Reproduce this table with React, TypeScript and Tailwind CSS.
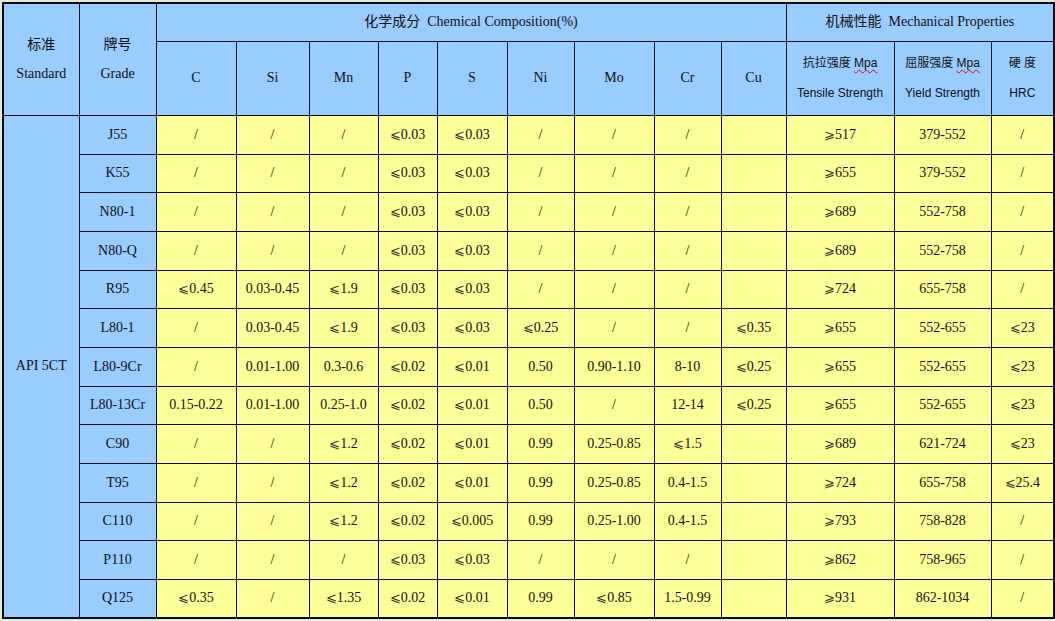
import React from "react";

const serif = "font-['Liberation_Serif','Noto_Sans_CJK_SC',serif]";
const sans = "font-['Liberation_Sans','Noto_Sans_CJK_SC',sans-serif]";

const colWidths = [76, 77, 80, 73, 69, 59, 70, 67, 80, 67, 65, 108, 97, 63];
const rowHeights = [39, 38, 39, 39, 38, 39, 39, 38, 39, 39, 38, 39, 39];

const elements = ["C", "Si", "Mn", "P", "S", "Ni", "Mo", "Cr", "Cu"];

const rows: string[][] = [
  ["J55", "/", "/", "/", "⩽0.03", "⩽0.03", "/", "/", "/", "", "⩾517", "379-552", "/"],
  ["K55", "/", "/", "/", "⩽0.03", "⩽0.03", "/", "/", "/", "", "⩾655", "379-552", "/"],
  ["N80-1", "/", "/", "/", "⩽0.03", "⩽0.03", "/", "/", "/", "", "⩾689", "552-758", "/"],
  ["N80-Q", "/", "/", "/", "⩽0.03", "⩽0.03", "/", "/", "/", "", "⩾689", "552-758", "/"],
  ["R95", "⩽0.45", "0.03-0.45", "⩽1.9", "⩽0.03", "⩽0.03", "/", "/", "/", "", "⩾724", "655-758", "/"],
  ["L80-1", "/", "0.03-0.45", "⩽1.9", "⩽0.03", "⩽0.03", "⩽0.25", "/", "/", "⩽0.35", "⩾655", "552-655", "⩽23"],
  ["L80-9Cr", "/", "0.01-1.00", "0.3-0.6", "⩽0.02", "⩽0.01", "0.50", "0.90-1.10", "8-10", "⩽0.25", "⩾655", "552-655", "⩽23"],
  ["L80-13Cr", "0.15-0.22", "0.01-1.00", "0.25-1.0", "⩽0.02", "⩽0.01", "0.50", "/", "12-14", "⩽0.25", "⩾655", "552-655", "⩽23"],
  ["C90", "/", "/", "⩽1.2", "⩽0.02", "⩽0.01", "0.99", "0.25-0.85", "⩽1.5", "", "⩾689", "621-724", "⩽23"],
  ["T95", "/", "/", "⩽1.2", "⩽0.02", "⩽0.01", "0.99", "0.25-0.85", "0.4-1.5", "", "⩾724", "655-758", "⩽25.4"],
  ["C110", "/", "/", "⩽1.2", "⩽0.02", "⩽0.005", "0.99", "0.25-1.00", "0.4-1.5", "", "⩾793", "758-828", "/"],
  ["P110", "/", "/", "/", "⩽0.03", "⩽0.03", "/", "/", "/", "", "⩾862", "758-965", "/"],
  ["Q125", "⩽0.35", "/", "⩽1.35", "⩽0.02", "⩽0.01", "0.99", "⩽0.85", "1.5-0.99", "", "⩾931", "862-1034", "/"],
];

const blue = "bg-[#99ccff]";
const yellow = "bg-[#ffff99]";
const cell = "border border-[#0a0a1e] text-center align-middle p-0";

// the ⩽ / ⩾ signs come from DejaVu, which is heavier than the rest
const Value = ({ v }: { v: string }) => {
  if (v.startsWith("⩽") || v.startsWith("⩾")) {
    return (
      <>
        <span className="font-['DejaVu_Sans'] font-extralight text-[13px] text-[#333]">
          {v[0]}
        </span>
        {v.slice(1)}
      </>
    );
  }
  return <>{v}</>;
};

const App = () => {
  return (
    <div className="w-[1055px] h-[621px] bg-[#e3ecd6] pt-[2px] pl-[2px] overflow-hidden">
      <table
        className={`table-fixed border-collapse border-2 border-[#0a0a1e] text-[14px] leading-none text-[#111] ${serif}`}
        style={{ width: 1051 }}
      >
        <colgroup>
          {colWidths.map((w, i) => (
            <col key={i} style={{ width: w }} />
          ))}
        </colgroup>
        <thead>
          <tr className="h-[38px]">
            <th rowSpan={2} className={`${cell} ${blue} font-normal`}>
              <div className="flex flex-col items-center gap-[15px]">
                <span>标准</span>
                <span>Standard</span>
              </div>
            </th>
            <th rowSpan={2} className={`${cell} ${blue} font-normal`}>
              <div className="flex flex-col items-center gap-[15px]">
                <span>牌号</span>
                <span>Grade</span>
              </div>
            </th>
            <th colSpan={9} className={`${cell} ${blue} font-normal`}>
              化学成分&nbsp; Chemical Composition(%)
            </th>
            <th colSpan={3} className={`${cell} ${blue} font-normal`}>
              机械性能&nbsp; Mechanical Properties
            </th>
          </tr>
          <tr className="h-[74px]">
            {elements.map((e) => (
              <th key={e} className={`${cell} ${blue} font-normal`}>
                {e}
              </th>
            ))}
            <th className={`${cell} ${blue} font-normal text-[12px] ${sans}`}>
              <div className="flex flex-col items-center gap-[18px]">
                <span>
                  抗拉强度{" "}
                  <span className="underline decoration-wavy decoration-red-600 decoration-1 underline-offset-2">
                    Mpa
                  </span>
                </span>
                <span>Tensile Strength</span>
              </div>
            </th>
            <th className={`${cell} ${blue} font-normal text-[12px] ${sans}`}>
              <div className="flex flex-col items-center gap-[18px]">
                <span>
                  屈服强度{" "}
                  <span className="underline decoration-wavy decoration-red-600 decoration-1 underline-offset-2">
                    Mpa
                  </span>
                </span>
                <span>Yield Strength</span>
              </div>
            </th>
            <th className={`${cell} ${blue} font-normal text-[12px] ${sans}`}>
              <div className="flex flex-col items-center gap-[18px]">
                <span>硬&nbsp;度</span>
                <span>HRC</span>
              </div>
            </th>
          </tr>
        </thead>
        <tbody>
          {rows.map((r, i) => (
            <tr key={r[0]} style={{ height: rowHeights[i] }}>
              {i === 0 && (
                <td rowSpan={rows.length} className={`${cell} ${blue}`}>
                  API 5CT
                </td>
              )}
              <td className={`${cell} ${blue}`}>{r[0]}</td>
              {r.slice(1).map((v, j) => (
                <td key={j} className={`${cell} ${yellow}`}>
                  <Value v={v} />
                </td>
              ))}
            </tr>
          ))}
        </tbody>
      </table>
    </div>
  );
};

export default App;
